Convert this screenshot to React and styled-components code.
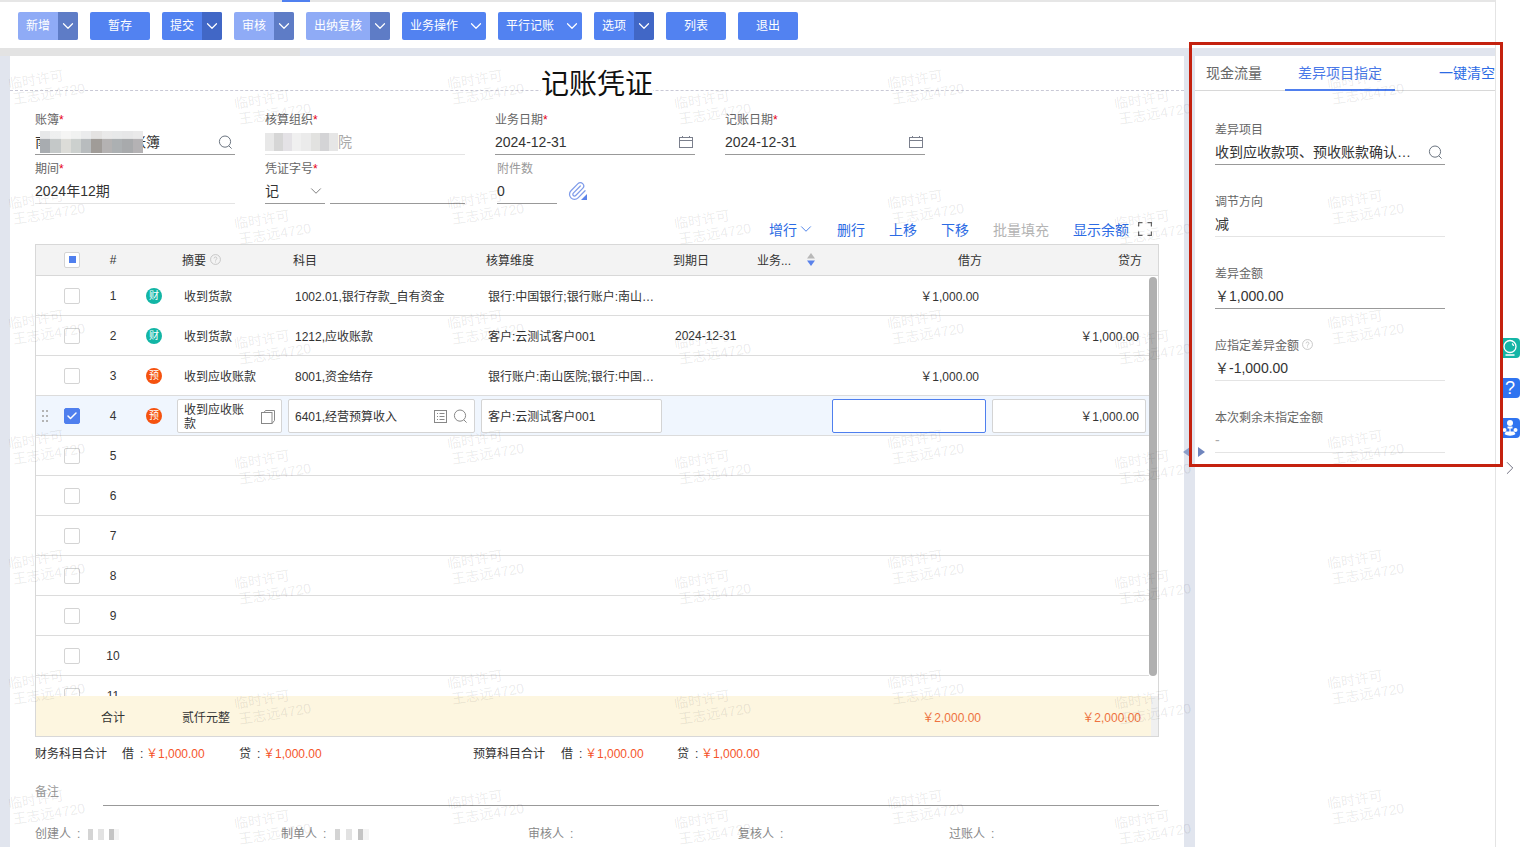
import React from "react";
import styled, { createGlobalStyle } from "styled-components";
import { ChevronDown, ChevronRight, Paperclip, Check } from "lucide-react";

const GlobalStyle = createGlobalStyle`
  html, body {
    margin: 0;
    padding: 0;
    background: #fff;
    overflow: hidden;
    font-family: "Liberation Sans", "Noto Sans CJK SC", sans-serif;
    font-size: 12px;
    color: #333;
  }
  * { box-sizing: border-box; }
`;

const Page = styled.div`
  position: relative;
  display: flex;
  width: 1523px;
  height: 847px;
  overflow: hidden;
`;

const Workspace = styled.div`
  width: 1495px;
  display: flex;
  flex-direction: column;
`;

const TopStrip = styled.div`
  height: 2px;
  background: #e6e6e6;
  padding-left: 282px;
  &::before {
    content: "";
    display: block;
    width: 28px;
    height: 2px;
    background: #5080f0;
  }
`;

const Toolbar = styled.div`
  height: 46px;
  padding: 10px 0 0 18px;
  display: flex;
  gap: 12px;
  background: #fff;
`;

const Btn = styled.div`
  width: ${(p) => p.$w || 60}px;
  height: 28px;
  display: flex;
  border-radius: 2px;
  overflow: hidden;
  color: #fff;
  font-size: 12px;
  background: ${(p) => (p.$off ? "#8fabf6" : "#5282f1")};
`;

const BtnLabel = styled.span`
  flex: 1;
  line-height: 28px;
  text-align: ${(p) => (p.$center ? "center" : "left")};
  padding-left: ${(p) => (p.$center ? 0 : 8)}px;
`;

const BtnArrow = styled.span`
  width: 20px;
  display: flex;
  align-items: center;
  justify-content: center;
  background: ${(p) => (p.$plain ? "transparent" : p.$off ? "#5e7cc6" : "#4167c6")};
`;

const Body = styled.div`
  flex: 1;
  display: flex;
  padding: 8px 0 0 10px;
  background: linear-gradient(#e3e3e3, #e3e3e3) 0 0 / 300px 8px no-repeat, #e1e5ee;
  min-height: 0;
`;

const Main = styled.div`
  width: 1174px;
  background: #fff;
  flex-shrink: 0;
`;

const TitleRow = styled.div`
  height: 35px;
  border-bottom: 1px dashed #c9c9d6;
  display: flex;
  justify-content: center;
`;

const Title = styled.h1`
  margin: 0;
  height: 44px;
  padding: 9px 0 0;
  background: #fff;
  font-size: 28px;
  font-weight: 400;
  line-height: 40px;
  color: #111;
`;

const FormGrid = styled.div`
  margin-top: 19px;
  padding-left: 25px;
  display: grid;
  grid-template-columns: repeat(4, 200px);
  column-gap: 30px;
  row-gap: 4px;
`;

const Field = styled.div`
  height: 45px;
  padding-left: ${(p) => p.$inset || 0}px;
`;

const Label = styled.div`
  height: 18px;
  padding-top: 1px;
  line-height: 18px;
  font-size: 12px;
  color: ${(p) => (p.$muted ? "#999" : "#666")};
`;

const Star = styled.span`
  color: #e60012;
`;

const Value = styled.div`
  height: 27px;
  display: flex;
  align-items: center;
  justify-content: space-between;
  font-size: 14px;
  line-height: 24px;
  padding-top: 2px;
  color: ${(p) => (p.$muted ? "#aaa" : "#333")};
  border-bottom: 1px solid ${(p) => (p.$light ? "#e4e4e4" : "#999")};
  padding-right: ${(p) => (p.$pad ? 2 : 0)}px;
  width: ${(p) => (p.$w ? `${p.$w}px` : "auto")};
`;

const ValueText = styled.span`
  display: flex;
  align-items: center;
  white-space: nowrap;
`;

const Mosaic = styled.span`
  position: relative;
  z-index: 1;
  display: inline-block;
  width: ${(p) => p.$w}px;
  height: ${(p) => p.$h || 18}px;
  background: ${(p) => p.$bg};
  margin: 0 ${(p) => p.$mr || 0}px 0 ${(p) => p.$ml || 0}px;
  filter: blur(0.6px);
`;

const DoubleField = styled.div`
  display: flex;
  gap: 5px;
  & > div { flex-shrink: 0; }
`;

const ClipRow = styled.div`
  display: flex;
  align-items: center;
  gap: 10px;
`;

const ClipIcon = styled.span`
  position: relative;
  display: flex;
  color: #7f9cea;
  &::after {
    content: "";
    position: absolute;
    right: 0;
    bottom: 1px;
    border-style: solid;
    border-width: 0 0 6px 6px;
    border-color: transparent transparent #5a82ea transparent;
  }
`;

const Actions = styled.div`
  height: 40px;
  padding: 15px 32px 0 0;
  display: flex;
  justify-content: flex-end;
  gap: 24px;
`;

const Action = styled.span`
  display: flex;
  align-items: center;
  gap: ${(p) => p.$gap || 0}px;
  height: 20px;
  font-size: 14px;
  color: ${(p) => (p.$off ? "#b4b4b4" : "#2c6be4")};
  & > .more { margin-right: -2px; }
`;

const Table = styled.div`
  margin-left: 25px;
  width: 1124px;
  height: 493px;
  border: 1px solid #d8d8d8;
  display: flex;
  flex-direction: column;
`;

const cols = "56px 42px 40px 111px 193px 187px 84px 80px 160px 160px";

const HeadRow = styled.div`
  height: 31px;
  flex-shrink: 0;
  display: grid;
  grid-template-columns: ${cols};
  align-items: center;
  padding-bottom: 1px;
  background: #f3f3f3;
  border-bottom: 1px solid #d8d8d8;
`;

const HeadCell = styled.div`
  display: flex;
  align-items: center;
  gap: ${(p) => p.$gap || 4}px;
  font-size: 12px;
  color: #333;
  padding: ${(p) => (p.$right ? "0 7px 0 0" : p.$center ? "0" : "0 0 0 8px")};
  justify-content: ${(p) => (p.$right ? "flex-end" : p.$center ? "center" : "flex-start")};
`;

const RowsArea = styled.div`
  position: relative;
  height: 420px;
  flex-shrink: 0;
  overflow: hidden;
`;

const Scrollbar = styled.div`
  position: absolute;
  top: 1px;
  right: 1px;
  width: 8px;
  height: 399px;
  border-radius: 4px;
  background: #b0b0b0;
`;

const Row = styled.div`
  height: 40px;
  width: 1113px;
  display: grid;
  grid-template-columns: ${cols};
  align-items: center;
  border-bottom: 1px solid #dcdcdc;
  background: ${(p) => (p.$active ? "#f0f6fe" : "#fff")};
`;

const Cell = styled.div`
  font-size: 12px;
  color: #333;
  padding: ${(p) => (p.$right ? "0 10px 0 0" : p.$center ? "0" : "0 0 0 10px")};
  text-align: ${(p) => (p.$right ? "right" : p.$center ? "center" : "left")};
  white-space: nowrap;
  overflow: hidden;
  text-overflow: ellipsis;
`;

const CheckCell = styled.div`
  position: relative;
  padding-left: 28px;
  display: flex;
  align-items: center;
`;

const Box = styled.span`
  width: 16px;
  height: 16px;
  border-radius: 2px;
  display: flex;
  align-items: center;
  justify-content: center;
  color: #fff;
  border: 1px solid ${(p) => (p.$on ? "#4f7fee" : "#d4d4d4")};
  background: ${(p) => (p.$on ? "#4f7fee" : "#fff")};
`;

const BoxDot = styled.span`
  width: 7px;
  height: 7px;
  background: #4f7fee;
`;

const Handle = styled.span`
  position: absolute;
  left: 6px;
  top: 50%;
  margin-top: -6px;
  width: 6px;
  height: 13px;
  background: radial-gradient(circle at 1px 1px, #b4b4b4 1px, transparent 1.3px) 0 0 / 4px 5px;
`;

const Badge = styled.span`
  display: block;
  margin: 0 auto;
  width: 16px;
  height: 16px;
  border-radius: 50%;
  color: #fff;
  font-size: 10px;
  line-height: 16px;
  text-align: center;
  background: ${(p) => (p.$kind === "预" ? "#f5520f" : "#12b5a5")};
`;

const InputBox = styled.div`
  height: 34px;
  margin: 0 3px;
  display: flex;
  align-items: center;
  justify-content: ${(p) => (p.$right ? "flex-end" : "space-between")};
  padding: 2px 6px 0;
  font-size: 12px;
  line-height: 14px;
  background: #fff;
  border: 1px solid ${(p) => (p.$focus ? "#4f7fee" : "#d4d4d4")};
  border-radius: 2px;
`;

const WrapText = styled.span`
  width: 64px;
`;

const IconGroup = styled.span`
  display: flex;
  align-items: center;
  gap: 6px;
  color: #888;
`;

const Footer = styled.div`
  flex: 1;
  display: grid;
  grid-template-columns: ${cols};
  align-items: center;
  background: linear-gradient(#fdf6e0, #fdf6e0) 0 0 / 1115px 100% no-repeat, #f0f0f0;
`;

const FooterAmount = styled.div`
  grid-column: ${(p) => p.$col};
  text-align: right;
  padding-right: 8px;
  color: #ee7240;
  font-size: 12px;
`;

const FooterText = styled.div`
  grid-column: ${(p) => p.$col};
  padding-left: ${(p) => p.$pl || 0}px;
  font-size: 12px;
  white-space: nowrap;
`;

const Totals = styled.div`
  margin-left: 25px;
  height: 28px;
  padding-top: 2px;
  display: grid;
  grid-template-columns: 87px 26px 91px 26px 208px 88px 26px 90px 26px 100px;
  align-items: center;
  font-size: 12px;
  color: #333;
`;

const Money = styled.span`
  margin-left: -2px;
  color: #f5552b;
`;

const Colon = styled.span`
  padding: 0 3px 0 6px;
`;

const RemarkRow = styled.div`
  margin: 17px 25px 0;
  height: 24px;
  display: flex;
  color: #999;
  line-height: 20px;
`;

const RemarkLabel = styled.div`
  width: 68px;
`;

const RemarkLine = styled.div`
  flex: 1;
  border-bottom: 1px solid #999;
`;

const Signers = styled.div`
  margin-left: 25px;
  padding-top: 19px;
  display: grid;
  grid-template-columns: 246px 247px 210px 211px 200px;
  line-height: 18px;
  color: #888;
`;

const Signer = styled.div`
  display: flex;
  align-items: center;
`;

const Splitter = styled.div`
  position: relative;
  width: 11px;
  flex-shrink: 0;
`;

const Arrow = styled.span`
  position: absolute;
  top: 391px;
  left: ${(p) => p.$left}px;
  border-style: solid;
  border-width: 5px 0 5px 7px;
  border-color: transparent transparent transparent #6f85bd;
  transform: ${(p) => (p.$flip ? "scaleX(-1)" : "none")};
  opacity: ${(p) => (p.$flip ? 0.75 : 1)};
`;

const Side = styled.div`
  width: 300px;
  flex-shrink: 0;
  background: #fff;
`;

const Tabs = styled.div`
  height: 35px;
  display: flex;
  border-bottom: 1px solid #d8d8d8;
  position: relative;
`;

const Tab = styled.div`
  width: ${(p) => p.$w}px;
  margin-left: ${(p) => p.$ml || 0}px;
  text-align: center;
  font-size: 14px;
  line-height: 34px;
  height: 35px;
  color: ${(p) => (p.$on ? "#4a79e8" : "#666")};
  border-bottom: 2px solid ${(p) => (p.$on ? "#4f7fee" : "transparent")};
`;

const ClearLink = styled.span`
  margin-left: auto;
  font-size: 14px;
  line-height: 34px;
  color: #2c6be4;
`;

const SideForm = styled.div`
  padding: 29px 0 0 20px;
  width: 250px;
  display: flex;
  flex-direction: column;
  gap: 27px;
`;

const Ellipsis = styled.span`
  width: 200px;
  white-space: nowrap;
  overflow: hidden;
  text-overflow: ellipsis;
`;

const Rail = styled.div`
  width: 28px;
  flex-shrink: 0;
  border-left: 1px solid #e4e4e4;
  background: #fff;
  padding: 338px 0 0 4px;
  display: flex;
  flex-direction: column;
  gap: 20px;
`;

const RailBtn = styled.div`
  width: 20px;
  height: 20px;
  border-radius: 0 4px 4px 0;
  background: ${(p) => p.$bg};
  color: #fff;
  font-size: 18px;
  display: flex;
  align-items: center;
  justify-content: center;
`;

const RailChevron = styled.div`
  margin: -1px 0 0 -1px;
  color: #667;
  display: flex;
`;

const RedFrame = styled.div`
  position: absolute;
  left: 1189px;
  top: 42px;
  width: 314px;
  height: 425px;
  border: 3px solid #c4210e;
  pointer-events: none;
`;

const Marks = styled.div`
  position: absolute;
  inset: 0;
  pointer-events: none;
  overflow: hidden;
`;

const Mark = styled.div`
  position: absolute;
  width: 90px;
  font-size: 14px;
  line-height: 16px;
  color: rgba(0, 0, 0, 0.085);
  white-space: nowrap;
  transform: rotate(-9deg);
  transform-origin: left top;
`;

const MarkLine = styled.div`
  padding-left: ${(p) => p.$pl || 0}px;
`;

const HelpIcon = ({ size = 11 }) => (
  <svg width={size} height={size} viewBox="0 0 12 12" fill="none" stroke="#c4c4c4">
    <circle cx="6" cy="6" r="5.4" />
    <path d="M4.4 4.8c0-1 .8-1.6 1.6-1.6s1.6.6 1.6 1.5c0 1.2-1.6 1.2-1.6 2.6M6 8.2v1" />
  </svg>
);

const SearchIcon = ({ color = "#6b7480" }) => (
  <svg width="15" height="15" viewBox="0 0 15 15" fill="none" stroke={color} strokeWidth="1">
    <circle cx="7" cy="6.6" r="5.6" />
    <path d="M10.8 10.8l2.8 2.8" />
  </svg>
);

const CalendarIcon = () => (
  <svg width="14" height="12" viewBox="0 0 14 12" fill="none" stroke="#7a7f8c">
    <rect x="0.5" y="1.5" width="13" height="10" />
    <path d="M0.5 4.5h13M3.5 0v2M10.5 0v2" />
  </svg>
);

const CopyIcon = () => (
  <svg width="14" height="14" viewBox="0 0 14 14" fill="none" stroke="#888">
    <rect x="0.5" y="2.5" width="10.5" height="11" />
    <path d="M3 2.5L4.5 .5H13.5V10.5L11 13.5" />
  </svg>
);

const ListIcon = () => (
  <svg width="13" height="13" viewBox="0 0 13 13" fill="none" stroke="#888">
    <rect x="0.5" y="0.5" width="12" height="12" />
    <path d="M3 3.5h1M5.5 3.5h5M3 6.5h1M5.5 6.5h5M3 9.5h1M5.5 9.5h5" />
  </svg>
);

const ExpandIcon = () => (
  <svg width="14" height="14" viewBox="0 0 14 14" fill="none" stroke="#666" strokeWidth="1.2">
    <path d="M.6 4.5V.6h3.9M9.5.6h3.9v3.9M13.4 9.5v3.9H9.5M4.5 13.4H.6V9.5" />
  </svg>
);

const SortIcon = () => (
  <svg width="8" height="13" viewBox="0 0 8 13">
    <path d="M4 0l4 5.5H0z" fill="#b8b8b8" />
    <path d="M4 13l4-5.5H0z" fill="#5a82ea" />
  </svg>
);

const BulbIcon = () => (
  <svg width="16" height="18" viewBox="0 0 16 18" fill="none" stroke="#fff" strokeWidth="1.3">
    <circle cx="8" cy="7.5" r="6" />
    <path d="M10 4.5a3.5 3.5 0 0 1 1.5 2.5M3.5 16h9" />
  </svg>
);

const TeamIcon = () => (
  <svg width="18" height="18" viewBox="0 0 18 18" fill="#fff">
    <circle cx="9" cy="4" r="3" />
    <path d="M6.5 7.5h5v2h-5z" />
    <circle cx="3.5" cy="11" r="2" />
    <circle cx="14.5" cy="11" r="2" />
    <path d="M5 12.5h8l1.5 2.5c-3 2.2-8 2.2-11 0z" />
    <path d="M8.4 9h1.2v4H8.4z" />
  </svg>
);

const mosaic = (list) =>
  `linear-gradient(90deg, ${list
    .map((c, i) => `${c} ${(i * 100) / list.length}% ${((i + 1) * 100) / list.length}%`)
    .join(", ")})`;

// the top band of the blurred name is much paler than the bottom one
const veil = "linear-gradient(rgba(255,255,255,.72), rgba(255,255,255,.72)) 0 0 / 100% 36% no-repeat";
const bookMosaic = `${veil}, ${mosaic(["#a8acb0", "#c4c8c8", "#dcdcd8", "#ccd0ce", "#b8bcbe", "#a09c98", "#b4b2b2", "#acb0b2", "#a8aaac", "#b4b2b4"])}`;
const orgMosaic = mosaic(["#e8e8e8", "#d6d6d6", "#e4e2e6", "#f0f0f0", "#ebebeb", "#e2e2e0", "#d4d4d6", "#e6e6e6"]);
const nameMosaic = mosaic(["#fff", "#d4d4d4", "#fff", "#e2e2e2", "#fff", "#c4c4c4", "#f4f4f4"]);

const buttons = [
  { text: "新增", split: true, off: true },
  { text: "暂存" },
  { text: "提交", split: true },
  { text: "审核", split: true, off: true },
  { text: "出纳复核", split: true, off: true, w: 84 },
  { text: "业务操作", plain: true, w: 84 },
  { text: "平行记账", plain: true, w: 84 },
  { text: "选项", split: true },
  { text: "列表" },
  { text: "退出" },
];

const rows = [
  { n: 1, kind: "财", sum: "收到货款", acc: "1002.01,银行存款_自有资金", dim: "银行:中国银行;银行账户:南山医院基本户", debit: "￥1,000.00" },
  { n: 2, kind: "财", sum: "收到货款", acc: "1212,应收账款", dim: "客户:云测试客户001", date: "2024-12-31", credit: "￥1,000.00" },
  { n: 3, kind: "预", sum: "收到应收账款", acc: "8001,资金结存", dim: "银行账户:南山医院;银行:中国银行基本户", debit: "￥1,000.00" },
  { n: 4, kind: "预", active: true },
  { n: 5 }, { n: 6 }, { n: 7 }, { n: 8 }, { n: 9 }, { n: 10 }, { n: 11 },
];

const sideFields = [
  { label: "差异项目", search: true },
  { label: "调节方向", value: "减", light: true },
  { label: "差异金额", value: "￥1,000.00" },
  { label: "应指定差异金额", value: "￥-1,000.00", light: true, help: true },
  { label: "本次剩余未指定金额", value: "-", light: true, muted: true },
];

const markSpots = [];
[7, 233, 446, 673, 886, 1113, 1326].forEach((x, c) => {
  for (let r = 0; r < 7; r++) {
    markSpots.push({ x, y: (c % 2 ? 96 : 76) + r * 120 });
  }
});

const ActiveCells = () => (
  <>
    <InputBox>
      <WrapText>收到应收账款</WrapText>
      <IconGroup><CopyIcon /></IconGroup>
    </InputBox>
    <InputBox>
      <span>6401,经营预算收入</span>
      <IconGroup><ListIcon /><SearchIcon color="#888" /></IconGroup>
    </InputBox>
    <InputBox>
      <span>客户:云测试客户001</span>
    </InputBox>
    <div />
    <div />
    <InputBox $focus />
    <InputBox $right>￥1,000.00</InputBox>
  </>
);

const App = () => (
  <Page>
    <GlobalStyle />
    <Workspace>
      <TopStrip />
      <Toolbar>
        {buttons.map((b) => (
          <Btn key={b.text} $w={b.w} $off={b.off}>
            <BtnLabel $center={!b.split && !b.plain}>{b.text}</BtnLabel>
            {(b.split || b.plain) && (
              <BtnArrow $off={b.off} $plain={b.plain}>
                <ChevronDown size={18} strokeWidth={1.6} />
              </BtnArrow>
            )}
          </Btn>
        ))}
      </Toolbar>
      <Body>
        <Main>
          <TitleRow>
            <Title>记账凭证</Title>
          </TitleRow>
          <FormGrid>
            <Field>
              <Label>账簿<Star>*</Star></Label>
              <Value $pad>
                <ValueText>南<Mosaic $w={103} $h={22} $ml={-9} $mr={-11} $bg={bookMosaic} />账簿</ValueText>
                <SearchIcon />
              </Value>
            </Field>
            <Field>
              <Label>核算组织<Star>*</Star></Label>
              <Value $muted $light>
                <ValueText><Mosaic $w={73} $bg={orgMosaic} />院</ValueText>
              </Value>
            </Field>
            <Field>
              <Label>业务日期<Star>*</Star></Label>
              <Value $pad>2024-12-31<CalendarIcon /></Value>
            </Field>
            <Field>
              <Label>记账日期<Star>*</Star></Label>
              <Value $pad>2024-12-31<CalendarIcon /></Value>
            </Field>
            <Field>
              <Label>期间<Star>*</Star></Label>
              <Value $light>2024年12期</Value>
            </Field>
            <Field>
              <Label>凭证字号<Star>*</Star></Label>
              <DoubleField>
                <Value $w={60}>
                  记<ChevronDown size={18} strokeWidth={1} color="#555" />
                </Value>
                <Value $w={135} />
              </DoubleField>
            </Field>
            <Field $inset={2}>
              <Label $muted>附件数</Label>
              <ClipRow>
                <Value $w={60}>0</Value>
                <ClipIcon><Paperclip size={20} strokeWidth={1.5} /></ClipIcon>
              </ClipRow>
            </Field>
          </FormGrid>
          <Actions>
            <Action>增行<ChevronDown className="more" size={18} strokeWidth={1.1} /></Action>
            <Action>删行</Action>
            <Action>上移</Action>
            <Action>下移</Action>
            <Action $off>批量填充</Action>
            <Action $gap={9}>显示余额<ExpandIcon /></Action>
          </Actions>
          <Table>
            <HeadRow>
              <CheckCell><Box><BoxDot /></Box></CheckCell>
              <HeadCell $center>#</HeadCell>
              <div />
              <HeadCell>摘要<HelpIcon /></HeadCell>
              <HeadCell>科目</HeadCell>
              <HeadCell>核算维度</HeadCell>
              <HeadCell>到期日</HeadCell>
              <HeadCell $gap={16}>业务...<SortIcon /></HeadCell>
              <HeadCell $right>借方</HeadCell>
              <HeadCell $right>贷方</HeadCell>
            </HeadRow>
            <RowsArea>
              {rows.map((r) => (
                <Row key={r.n} $active={r.active}>
                  <CheckCell>
                    {r.active && <Handle />}
                    <Box $on={r.active}>{r.active && <Check size={12} strokeWidth={3} />}</Box>
                  </CheckCell>
                  <Cell $center>{r.n}</Cell>
                  <div>{r.kind && <Badge $kind={r.kind}>{r.kind}</Badge>}</div>
                  {r.active ? (
                    <ActiveCells />
                  ) : (
                    <>
                      <Cell>{r.sum}</Cell>
                      <Cell>{r.acc}</Cell>
                      <Cell>{r.dim}</Cell>
                      <Cell>{r.date}</Cell>
                      <div />
                      <Cell $right>{r.debit}</Cell>
                      <Cell $right>{r.credit}</Cell>
                    </>
                  )}
                </Row>
              ))}
              <Scrollbar />
            </RowsArea>
            <Footer>
              <FooterText $col="2 / 3" $pl={9}>合计</FooterText>
              <FooterText $col="4 / 5" $pl={8}>贰仟元整</FooterText>
              <FooterAmount $col="9 / 10">￥2,000.00</FooterAmount>
              <FooterAmount $col="10 / 11">￥2,000.00</FooterAmount>
            </Footer>
          </Table>
          <Totals>
            <span>财务科目合计</span>
            <span>借<Colon>:</Colon></span>
            <Money>￥1,000.00</Money>
            <span>贷<Colon>:</Colon></span>
            <Money>￥1,000.00</Money>
            <span>预算科目合计</span>
            <span>借<Colon>:</Colon></span>
            <Money>￥1,000.00</Money>
            <span>贷<Colon>:</Colon></span>
            <Money>￥1,000.00</Money>
          </Totals>
          <RemarkRow>
            <RemarkLabel>备注</RemarkLabel>
            <RemarkLine />
          </RemarkRow>
          <Signers>
            <Signer>创建人<Colon>:</Colon><Mosaic $w={36} $h={11} $bg={nameMosaic} /></Signer>
            <Signer>制单人<Colon>:</Colon><Mosaic $w={40} $h={11} $bg={nameMosaic} /></Signer>
            <Signer>审核人<Colon>:</Colon></Signer>
            <Signer>复核人<Colon>:</Colon></Signer>
            <Signer>过账人<Colon>:</Colon></Signer>
          </Signers>
        </Main>
        <Splitter>
          <Arrow $left={-1} $flip />
          <Arrow $left={14} />
        </Splitter>
        <Side>
          <Tabs>
            <Tab $w={78}>现金流量</Tab>
            <Tab $w={110} $ml={12} $on>差异项目指定</Tab>
            <ClearLink>一键清空</ClearLink>
          </Tabs>
          <SideForm>
            {sideFields.map((f) => (
              <Field key={f.label}>
                <Label>
                  {f.label}{f.help && <> <HelpIcon /></>}
                </Label>
                <Value $light={f.light} $muted={f.muted} $pad={f.search}>
                  {f.search ? (
                    <>
                      <Ellipsis>收到应收款项、预收账款确认收入调整</Ellipsis>
                      <SearchIcon />
                    </>
                  ) : (
                    f.value
                  )}
                </Value>
              </Field>
            ))}
          </SideForm>
        </Side>
      </Body>
    </Workspace>
    <Rail>
      <RailBtn $bg="#14b5a6"><BulbIcon /></RailBtn>
      <RailBtn $bg="#2f74f0">?</RailBtn>
      <RailBtn $bg="#2f74f0"><TeamIcon /></RailBtn>
      <RailChevron><ChevronRight size={22} strokeWidth={1} /></RailChevron>
    </Rail>
    <Marks>
      {markSpots.map((m) => (
        <Mark key={`${m.x}-${m.y}`} style={{ left: m.x, top: m.y }}>
          <MarkLine>临时许可</MarkLine>
          <MarkLine $pl={2}>王志远4720</MarkLine>
        </Mark>
      ))}
    </Marks>
    <RedFrame />
  </Page>
);

export default App;
